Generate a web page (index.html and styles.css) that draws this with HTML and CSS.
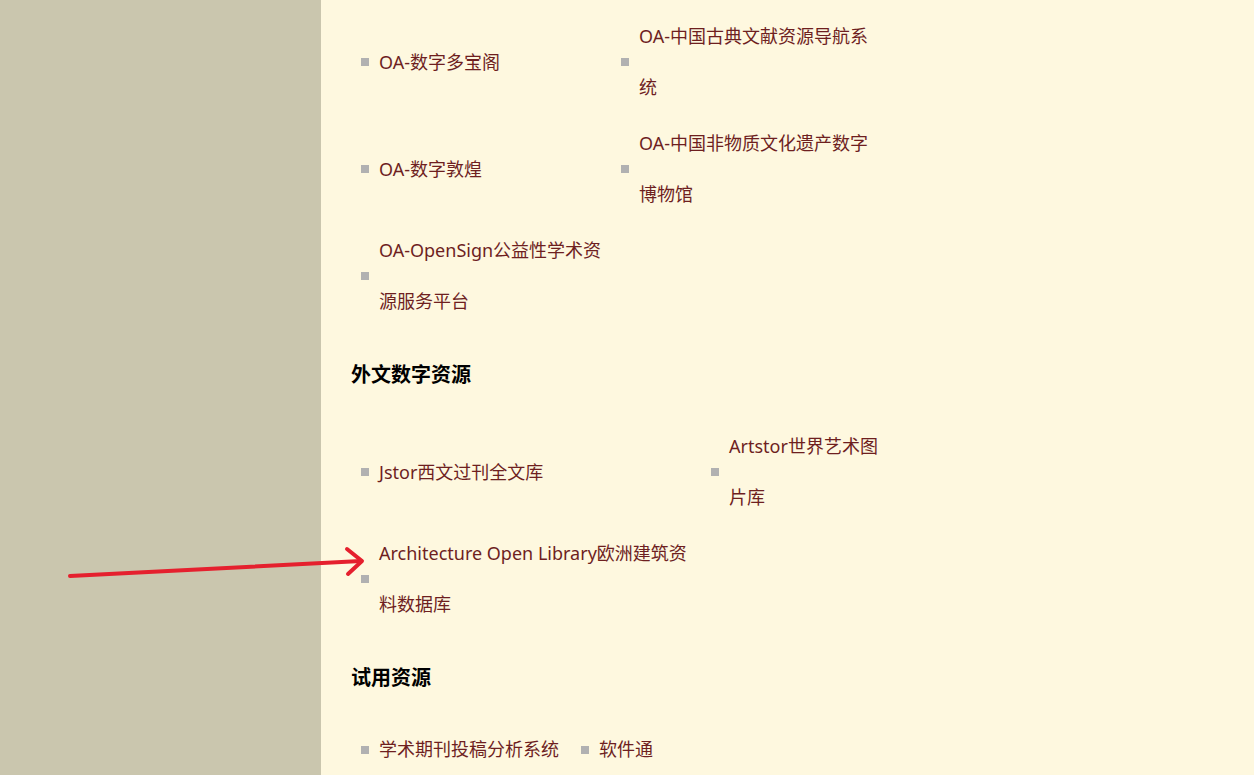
FILE: index.html
```html
<!DOCTYPE html>
<html lang="zh-CN">
<head>
<meta charset="utf-8">
<title>资源导航</title>
<link rel="stylesheet" href="styles.css">
</head>
<body>
<div class="page">
  <aside class="side"></aside>
  <main class="main">
    <ul class="grid grid-oa">
      <li class="item"><span class="dot"></span><a class="txt" href="#">OA-数字多宝阁</a></li>
      <li class="item"><span class="dot"></span><a class="txt" href="#">OA-中国古典文献资源导航系<br>统</a></li>
      <li class="item"><span class="dot"></span><a class="txt" href="#">OA-数字敦煌</a></li>
      <li class="item"><span class="dot"></span><a class="txt" href="#">OA-中国非物质文化遗产数字<br>博物馆</a></li>
      <li class="item"><span class="dot"></span><a class="txt" href="#">OA-OpenSign公益性学术资<br>源服务平台</a></li>
    </ul>
    <h3 class="head">外文数字资源</h3>
    <ul class="grid grid-wai">
      <li class="item"><span class="dot"></span><a class="txt" href="#">Jstor西文过刊全文库</a></li>
      <li class="item"><span class="dot"></span><a class="txt" href="#">Artstor世界艺术图<br>片库</a></li>
      <li class="item"><span class="dot"></span><a class="txt" href="#">Architecture Open Library欧洲建筑资<br>料数据库</a></li>
    </ul>
    <h3 class="head">试用资源</h3>
    <ul class="grid grid-try">
      <li class="item"><span class="dot"></span><a class="txt" href="#">学术期刊投稿分析系统</a></li>
      <li class="item"><span class="dot"></span><a class="txt" href="#">软件通</a></li>
    </ul>
  </main>
</div>
<svg class="arrow" width="1254" height="775" viewBox="0 0 1254 775" aria-hidden="true">
  <path d="M70 576 L361 561" fill="none" stroke="#e5202e" stroke-width="4" stroke-linecap="round"/>
  <path d="M347 549 L362 561 L348 574" fill="none" stroke="#e5202e" stroke-width="4" stroke-linecap="round" stroke-linejoin="round"/>
</svg>
</body>
</html>
```
FILE: styles.css
```css
html, body {
  margin: 0;
  padding: 0;
  height: 100%;
  overflow: hidden;
}
body {
  font-family: "Noto Sans", "Noto Sans CJK SC", sans-serif;
  background: #fef8df;
}
.page {
  display: flex;
  min-height: 775px;
}
.side {
  width: 321px;
  flex: none;
  background: #cac6ae;
}
.main {
  flex: 1;
  background: #fef8df;
  padding: 11px 0 0 30px;
}
.grid {
  list-style: none;
  margin: 0;
  padding: 0 0 0 10px;
  display: grid;
  align-items: center;
  row-gap: 5px;
}
.grid-oa { grid-template-columns: 260px 260px; }
.grid-wai { grid-template-columns: 350px 260px; }
.grid-try { grid-template-columns: 220px 200px; }
.item {
  display: flex;
  align-items: center;
}
.dot {
  width: 8px;
  height: 8px;
  background: #b1b1b1;
  flex: none;
  margin-right: 10px;
}
.txt {
  font-size: 18px;
  line-height: 51px;
  color: #6e1f1f;
  text-decoration: none;
  white-space: nowrap;
}
.head {
  margin: 33px 0 31px 0;
  font-size: 20px;
  line-height: 30px;
  font-weight: bold;
  color: #000;
}
.arrow {
  position: absolute;
  left: 0;
  top: 0;
  pointer-events: none;
}
```
